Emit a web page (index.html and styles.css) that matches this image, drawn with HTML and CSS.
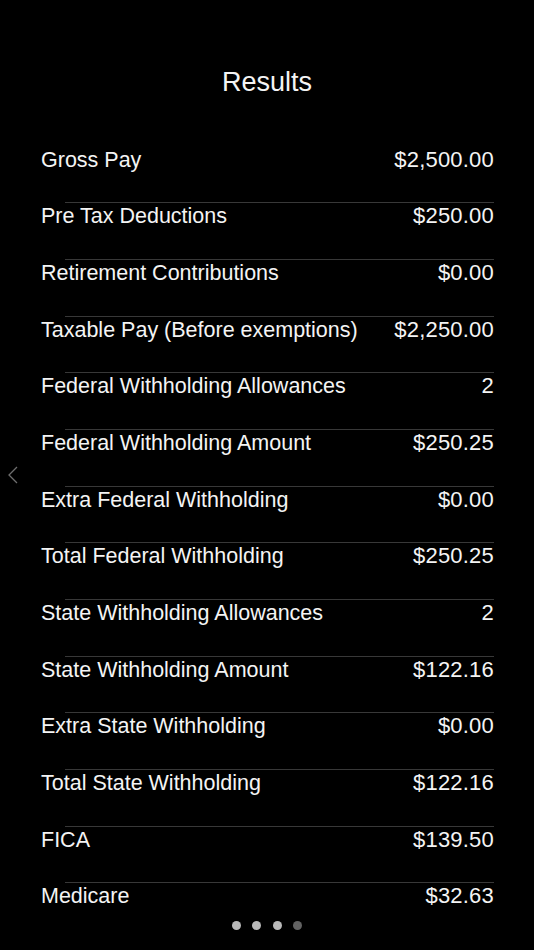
FILE: index.html
```html
<!DOCTYPE html>
<html lang="en">
<head>
<meta charset="utf-8">
<title>Results</title>
<link rel="stylesheet" href="styles.css">
</head>
<body>
<div class="screen">
  <h1 class="title">Results</h1>
  <div class="list">
    <div class="row"><span class="label">Gross Pay</span><span class="value">$2,500.00</span></div>
    <div class="row"><span class="label">Pre Tax Deductions</span><span class="value">$250.00</span></div>
    <div class="row"><span class="label">Retirement Contributions</span><span class="value">$0.00</span></div>
    <div class="row"><span class="label">Taxable Pay (Before exemptions)</span><span class="value">$2,250.00</span></div>
    <div class="row"><span class="label">Federal Withholding Allowances</span><span class="value">2</span></div>
    <div class="row"><span class="label">Federal Withholding Amount</span><span class="value">$250.25</span></div>
    <div class="row"><span class="label">Extra Federal Withholding</span><span class="value">$0.00</span></div>
    <div class="row"><span class="label">Total Federal Withholding</span><span class="value">$250.25</span></div>
    <div class="row"><span class="label">State Withholding Allowances</span><span class="value">2</span></div>
    <div class="row"><span class="label">State Withholding Amount</span><span class="value">$122.16</span></div>
    <div class="row"><span class="label">Extra State Withholding</span><span class="value">$0.00</span></div>
    <div class="row"><span class="label">Total State Withholding</span><span class="value">$122.16</span></div>
    <div class="row"><span class="label">FICA</span><span class="value">$139.50</span></div>
    <div class="row"><span class="label">Medicare</span><span class="value">$32.63</span></div>
  </div>
  <svg class="chevron" width="12" height="20" viewBox="0 0 12 20" aria-hidden="true">
    <path d="M10 2 L2 10 L10 18" fill="none" stroke="#6e6e6e" stroke-width="1.3"/>
  </svg>
  <div class="pager">
    <span class="dot"></span><span class="dot"></span><span class="dot"></span><span class="dot dot-current"></span>
  </div>
</div>
</body>
</html>
```

FILE: styles.css
```css
html, body {
  margin: 0;
  padding: 0;
  background: #000;
}

.screen {
  position: relative;
  width: 534px;
  height: 950px;
  overflow: hidden;
  background: #000;
  color: #f4f4f4;
  font-family: "Liberation Sans", Arial, sans-serif;
}

.title {
  margin: 0;
  padding-top: 66px;
  height: 32px;
  line-height: 32px;
  font-size: 27px;
  font-weight: normal;
  text-align: center;
  color: #f4f4f4;
}

.list {
  margin: 47.5px 40px 0 40px;
  display: flex;
  flex-direction: column;
}

.row {
  height: 56.7px;
  box-sizing: border-box;
  display: flex;
  justify-content: space-between;
  align-items: baseline;
  font-size: 22px;
  line-height: 27px;
}

.row + .row {
  background: linear-gradient(#383838, #383838) 25px 0 / calc(100% - 24px) 1px no-repeat;
}

.label {
  white-space: nowrap;
  padding-left: 1px;
  font-size: 21.5px;
}

.value {
  white-space: nowrap;
  text-align: right;
  letter-spacing: 0.2px;
}

.chevron {
  position: absolute;
  left: 7px;
  top: 465px;
}

.pager {
  position: absolute;
  left: 0;
  right: 0;
  top: 921px;
  display: flex;
  justify-content: center;
  gap: 11.6px;
}

.dot {
  width: 9px;
  height: 9px;
  border-radius: 50%;
  background: #b9b9b9;
}

.dot-current {
  background: #626262;
}
```
